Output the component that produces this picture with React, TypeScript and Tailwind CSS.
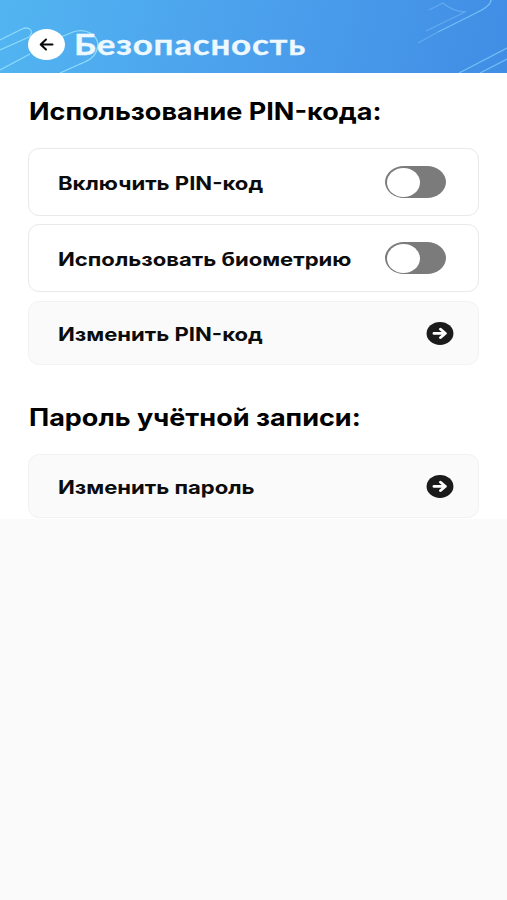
import React from "react";

function Toggle() {
  return (
    <button type="button" role="switch" aria-checked="false" className="mr-[32px] flex h-[32px] w-[61px] items-center rounded-[19px/16px] bg-[#7b7b7b] pl-[2px]">
      <span className="h-[29px] w-[33px] rounded-[50%] bg-white" />
    </button>
  );
}

function ArrowBadge() {
  return (
    <svg className="mr-[24px] h-[24px] w-[28px]" viewBox="0 0 24 24" preserveAspectRatio="none" fill="none">
      <circle cx="12" cy="12.4" r="11.5" fill="#1b1b1b" />
      <path d="M6.9 12.4h9.6M12.4 8.2l4.2 4.2-4.2 4.2" stroke="#fff" strokeWidth="2.6" strokeLinecap="round" strokeLinejoin="round" />
    </svg>
  );
}

function Label({ children }: { children: React.ReactNode }) {
  return <span className="mt-[2px] origin-left scale-x-[1.193] whitespace-nowrap text-[18.5px] font-bold leading-6 text-[#0c0c0c]">{children}</span>;
}

function Heading({ children }: { children: React.ReactNode }) {
  return <h2 className="ml-px h-[30px] w-max origin-left scale-x-[1.125] whitespace-nowrap text-[24px] font-bold leading-[31px] text-black">{children}</h2>;
}

export default function App() {
  return (
    <div className="h-[900px] w-[507px] overflow-hidden bg-[#fafafa] font-['Inter','Liberation_Sans',sans-serif]">
      <header className="relative flex h-[73px] items-start bg-linear-[105deg,#52b5f1_0%,#4b9fec_52%,#408de5_100%] pl-[28px] pt-[29px]">
        <svg className="absolute inset-0 h-[73px] w-[507px]" viewBox="0 0 507 73" fill="none" strokeWidth="1.3">
          <path d="M0 40L22 29C29 26 35 31 29 37L0 50M0 70L30 54M61 37L73 32C87 27 101 37 97 49C95 58 87 61 80 64L60 73" stroke="#8bdafa" />
          <path d="M459 73L507 48M480 73L507 59" stroke="#74bdf5" />
          <path d="M438 32L476 13Q491 6 491 0" stroke="#74bdf5" />
          <path d="M438 32L418 43M426 31L465 12Q452 11 443 3L429 10" stroke="#69aff0" strokeOpacity=".8" />
        </svg>
        <button type="button" className="relative flex h-[31px] w-[37px] items-center justify-center rounded-[50%] bg-white">
          <svg className="h-[13px] w-[15px]" viewBox="0 0 15 13" fill="none" stroke="#080808" strokeWidth="2" strokeLinecap="round" strokeLinejoin="round">
            <path d="M13.5 6.5H2M7 1.5L1.7 6.5 7 11.5" />
          </svg>
        </button>
        <h1 className="relative ml-[9px] origin-left scale-x-[1.25] whitespace-nowrap font-['Lato','Inter',sans-serif] text-[28px] font-bold leading-[31px] tracking-[0.6px] text-[#edf8ff] [-webkit-text-stroke:0.3px_#edf8ff]">Безопасность</h1>
      </header>
      <main className="h-[446px] bg-white px-[28px] pt-[23px]">
        <Heading>Использование PIN-кода:</Heading>
        <div className="mt-[22px] flex h-[68px] items-center justify-between rounded-[11px] border-[1.5px] border-[#e9e9e9] bg-white pl-[29px]">
          <Label>Включить PIN-код</Label>
          <Toggle />
        </div>
        <div className="mt-[8px] flex h-[68px] items-center justify-between rounded-[11px] border-[1.5px] border-[#e9e9e9] bg-white pl-[29px]">
          <Label>Использовать биометрию</Label>
          <Toggle />
        </div>
        <div className="mt-[9px] flex h-[64px] items-center justify-between rounded-[11px] border border-[#f2f2f2] bg-[#fafafa] pl-[29px]">
          <Label>Изменить PIN-код</Label>
          <ArrowBadge />
        </div>
        <div className="pt-[37px]">
          <Heading>Пароль учётной записи:</Heading>
        </div>
        <div className="mt-[22px] flex h-[64px] items-center justify-between rounded-[11px] border border-[#f2f2f2] bg-[#fafafa] pl-[29px]">
          <Label>Изменить пароль</Label>
          <ArrowBadge />
        </div>
      </main>
    </div>
  );
}
